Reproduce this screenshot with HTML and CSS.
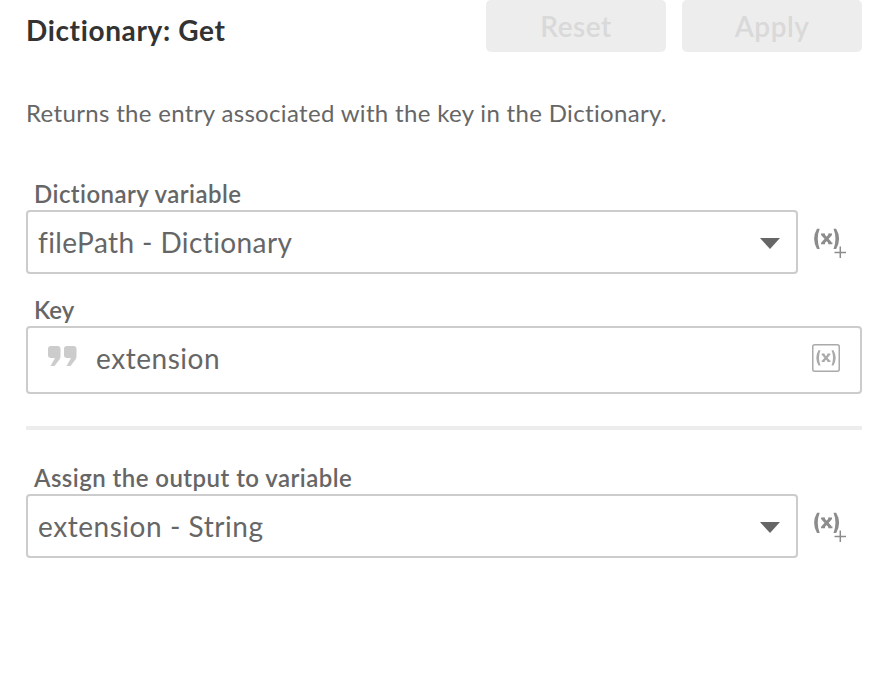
FILE: index.html
```html
<!DOCTYPE html>
<html lang="en">
<head>
<meta charset="utf-8">
<title>Dictionary: Get</title>
<link rel="stylesheet" href="styles.css">
</head>
<body>
<svg class="defs" aria-hidden="true">
  <symbol id="variable-add" viewBox="0 0 34 32">
    <g fill="#8c8c8c">
      <path d="M4 .8H6.700Q2.800 10.700 6.700 21H4Q-1.800 10.700 4 .8ZM20.500 .8H23.200Q29 10.700 23.200 21H20.500Q24.400 10.700 20.500 .8Z"/>
    </g>
    <g fill="none" stroke="#8c8c8c">
      <path d="M9.600 6.500L17.600 15.200M17.600 6.500L9.600 15.200" stroke-width="3"/>
      <path d="M8 6.300H12M15.300 6.300H19M8 15.300H12M15.300 15.300H19.400" stroke-width="1.800"/>
      <path d="M27.300 18.500V30M21.500 24.500H33" stroke-width="1.500"/>
    </g>
  </symbol>
</svg>
<main class="panel">
  <header class="header">
    <h1 class="title">Dictionary: Get</h1>
    <div class="actions">
      <button class="button" disabled>Reset</button>
      <button class="button" disabled>Apply</button>
    </div>
  </header>
  <p class="description">Returns the entry associated with the key in the Dictionary.</p>

  <section class="field">
    <label class="label">Dictionary variable</label>
    <div class="row">
      <div class="select"><span class="value value-dict">filePath - Dictionary</span><i class="caret"></i></div>
      <svg class="add"><use href="#variable-add"/></svg>
    </div>
  </section>

  <section class="field">
    <label class="label label-key">Key</label>
    <div class="input">
      <svg class="quote" viewBox="0 0 30 22"><path fill="#ccc" d="M3 1H9.500Q12.500 1 12.500 4V11Q12.500 13 11.500 14.500L6.500 21H2.500L7 13H3Q0 13 0 10V4Q0 1 3 1ZM19 1H25.500Q28.500 1 28.500 4V11Q28.500 13 27.500 14.500L22.500 21H18.500L23 13H19Q16 13 16 10V4Q16 1 19 1Z"/></svg>
      <span class="value">extension</span>
      <svg class="insert" viewBox="0 0 28 28"><rect x=".75" y=".75" width="26.500" height="26.500" rx="2" fill="none" stroke="#aaa" stroke-width="1.500"/><path fill="#aaa" d="M6.500 6.300H8.500Q5.500 13.500 8.500 21.500H6.500Q2.200 13.500 6.500 6.300ZM19.500 6.300H21.500Q25.800 13.500 21.500 21.500H19.500Q22.500 13.500 19.500 6.300Z"/><g fill="none" stroke="#aaa"><path d="M11 10.500L17 17.200M17 10.500L11 17.200" stroke-width="2.300"/><path d="M9.700 10.300H12.500M15.500 10.300H18.300M9.700 17.300H12.500M15.500 17.300H18.500" stroke-width="1.400"/></g></svg>
    </div>
  </section>

  <hr class="divider">

  <section class="field">
    <label class="label">Assign the output to variable</label>
    <div class="row">
      <div class="select"><span class="value">extension - String</span><i class="caret"></i></div>
      <svg class="add"><use href="#variable-add"/></svg>
    </div>
  </section>
</main>
</body>
</html>
```
FILE: styles.css
```css
* { box-sizing: border-box; }
body { margin: 0; background: #fff; color: #666; font-family: Lato, "Noto Sans", sans-serif; }
.defs { position: absolute; width: 0; height: 0; }
.panel { padding: 0 20px 0 26px; }
.header { display: flex; justify-content: space-between; height: 52px; }
.title { margin: 0; padding-top: 10px; color: #333; font-size: 28px; line-height: 40px; font-weight: 700; letter-spacing: .65px; white-space: nowrap; }
.actions { display: flex; gap: 16px; }
.button { width: 180px; height: 52px; padding: 0; border: 0; border-radius: 5px; background: #ededed; color: #d9d9d9; font: 600 28px/52px Lato, "Noto Sans", sans-serif; letter-spacing: .5px; }
.description { margin: 43px 0 0; font-size: 24px; line-height: 36px; letter-spacing: .33px; white-space: nowrap; }
.field { margin-top: 20px; }
.description + .field { margin-top: 47px; }
.label { display: block; height: 32px; padding-left: 8px; font-size: 24px; line-height: 32px; font-weight: 600; letter-spacing: .45px; }
.label-key { letter-spacing: 0; }
.row { display: flex; gap: 15px; }
.select { display: flex; align-items: center; justify-content: space-between; width: 772px; height: 64px; padding: 0 16px 0 10px; border: 2px solid #ccc; border-radius: 4px; }
.value { font-size: 28px; line-height: 40px; letter-spacing: .55px; white-space: nowrap; }
.value-dict { letter-spacing: .4px; }
.caret { width: 20px; height: 11px; margin-top: 3px; background: #666; clip-path: polygon(0 0, 100% 0, 50% 100%); }
.add { width: 34px; height: 32px; margin-top: 18px; }
.input { display: flex; align-items: center; height: 68px; padding: 0 20px 4px; border: 2px solid #ccc; border-radius: 4px; }
.quote { width: 30px; height: 22px; margin: -4px 18px 0 0; }
.insert { width: 28px; height: 28px; margin-left: auto; }
.divider { height: 4px; margin: 32px 0 0; border: 0; background: #ededed; }
.divider + .field { margin-top: 32px; }
```
